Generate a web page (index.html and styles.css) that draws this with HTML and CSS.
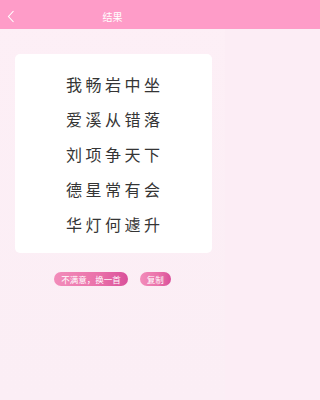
FILE: index.html
```html
<!DOCTYPE html>
<html lang="zh">
<head>
<meta charset="utf-8">
<link rel="stylesheet" href="styles.css">
</head>
<body>
<div class="page">
  <header class="bar">
    <div class="back">
      <svg width="8" height="13" viewBox="0 0 8 13"><polyline points="6.5,1 1.5,6.5 6.5,12" fill="none" stroke="#ffffff" stroke-width="1.1"/></svg>
    </div>
    <div class="title">结果</div>
    <div class="spacer"></div>
  </header>
  <main class="content">
    <section class="card">
      <p class="line">我畅岩中坐</p>
      <p class="line">爱溪从错落</p>
      <p class="line">刘项争天下</p>
      <p class="line">德星常有会</p>
      <p class="line">华灯何遽升</p>
    </section>
    <div class="actions">
      <button class="pill">不满意，换一首</button>
      <button class="pill">复制</button>
    </div>
  </main>
</div>
</body>
</html>
```
FILE: styles.css
```css
html {
  margin: 0;
  padding: 0;
  background: linear-gradient(180deg, #fe9cc8 0, #fe9cc8 29px, #fcedf5 29px, #fcedf5 100%);
}
body {
  margin: 0;
  padding: 0;
  width: 225px;
  height: 400px;
  font-family: "Noto Sans CJK SC", "Noto Sans", sans-serif;
  overflow: hidden;
}
.page {
  display: flex;
  flex-direction: column;
  height: 400px;
  background: linear-gradient(180deg, #fdeff6 0%, #fbeef5 100%);
}
.bar {
  height: 29px;
  background: #fe9cc8;
  display: grid;
  grid-template-columns: 28px 1fr 28px;
  align-items: center;
}
.back {
  display: flex;
  align-items: center;
  padding-left: 7px;
  padding-top: 1px;
}
.back svg {
  display: block;
}
.title {
  text-align: center;
  color: #ffffff;
  font-size: 10px;
  line-height: 29px;
  padding-top: 2px;
}
.content {
  display: flex;
  flex-direction: column;
  align-items: center;
  padding-top: 25px;
}
.card {
  width: 197px;
  margin-left: 1px;
  background: #ffffff;
  border-radius: 5px;
  padding: 13px 0 11px;
  box-sizing: border-box;
}
.line {
  margin: 0;
  text-align: center;
  font-size: 16px;
  line-height: 35px;
  letter-spacing: 3.5px;
  padding-left: 3.5px;
  color: #353535;
}
.actions {
  display: flex;
  justify-content: center;
  gap: 12px;
  margin-top: 19px;
}
.pill {
  border: none;
  margin: 0;
  height: 14px;
  padding: 0 7px;
  border-radius: 7px;
  background: linear-gradient(90deg, #f28cba 0%, #ea72aa 60%, #d9509a 100%);
  color: #ffffff;
  font-family: "Noto Sans CJK SC", sans-serif;
  font-size: 8.5px;
  line-height: 14px;
}
```
